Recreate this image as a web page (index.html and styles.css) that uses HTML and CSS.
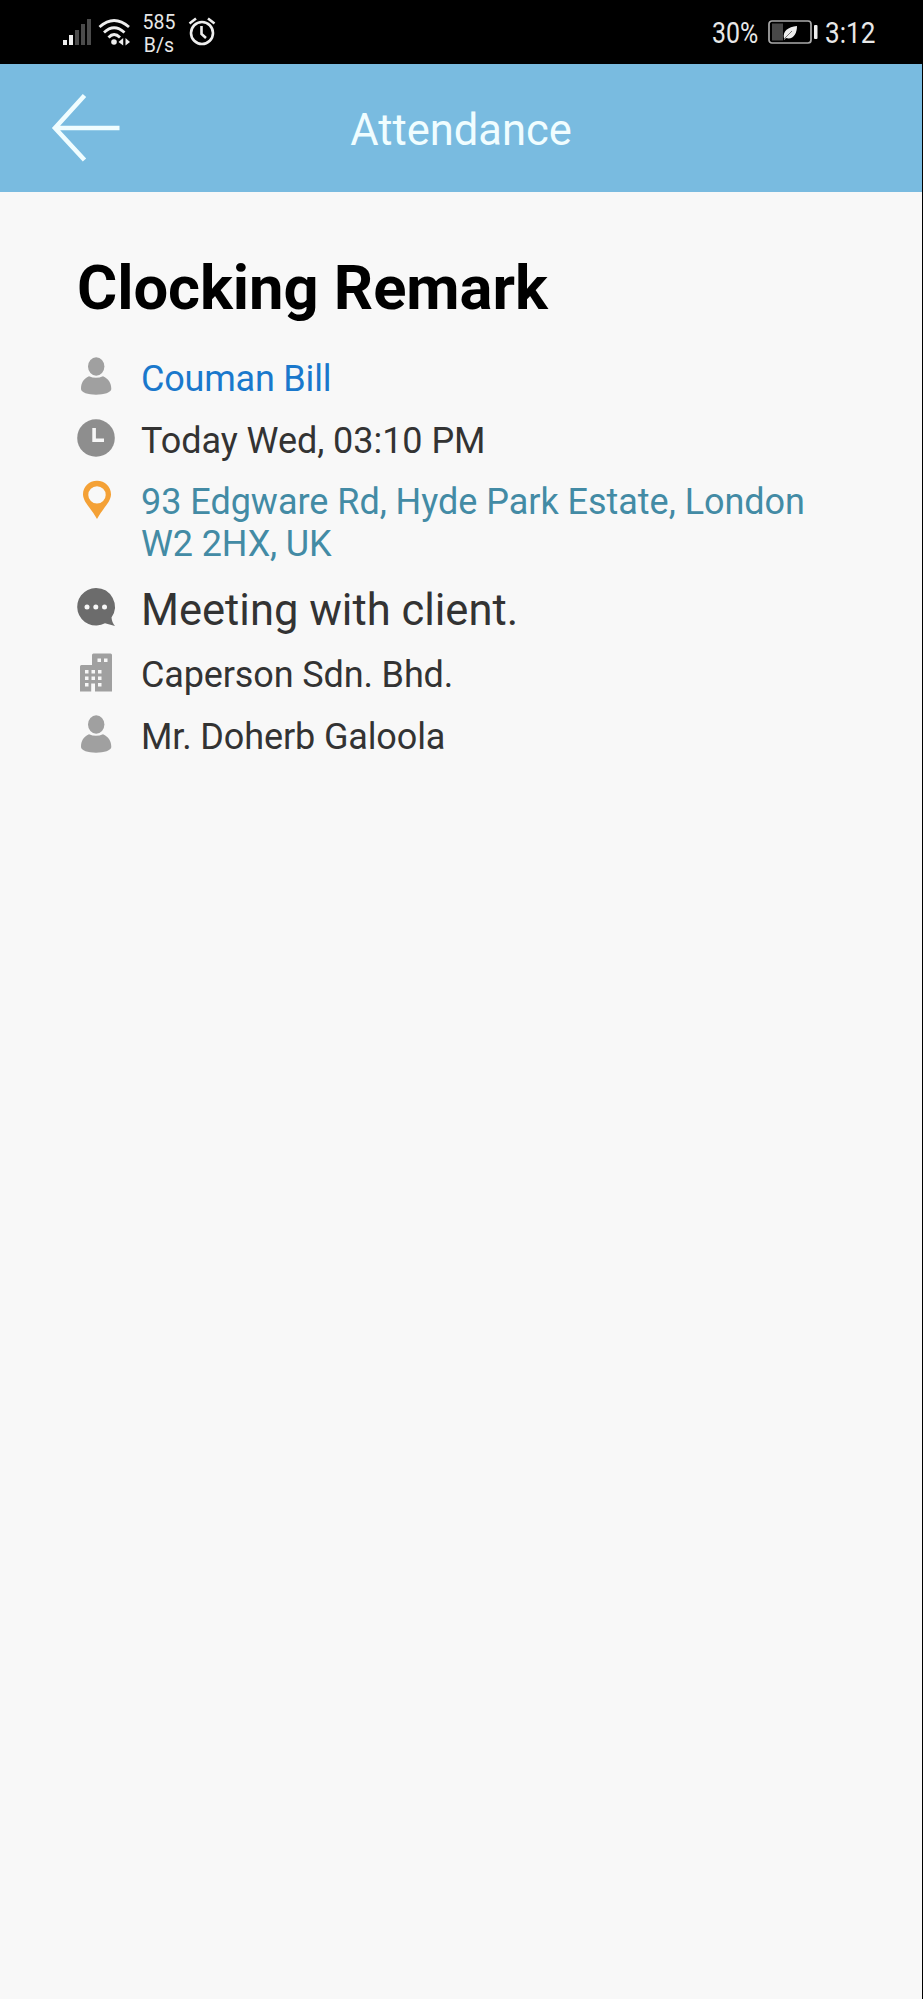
FILE: index.html
```
<!DOCTYPE html>
<html lang="en">
<head>
<meta charset="utf-8">
<title>Attendance</title>
<link rel="stylesheet" href="styles.css">
</head>
<body>
<div class="status">
  <svg class="signal" width="29" height="28" viewBox="0 0 29 28"><g fill="#eee"><rect x="0" y="22" width="4" height="5"/><rect x="6" y="17" width="4" height="10"/></g><g fill="#4b4b4b"><rect x="12" y="12" width="4" height="15"/><rect x="18" y="6" width="4" height="21"/><rect x="24" y="1" width="4" height="26"/></g></svg>
  <svg class="wifi" width="34" height="28" viewBox="0 0 34 28"><g fill="none" stroke="#eee" stroke-width="2.8"><path d="M1.500 9Q16 -4 31 9"/><path d="M6 14.500Q16 5 26.500 14.500"/><path d="M10.500 19.500Q16 13.500 22 19.500"/></g><circle cx="16" cy="24" r="2.800" fill="#eee"/><path fill="#eee" d="M20.500 24L25.200 20V27.500ZM27.500 20L32 24L27.500 27.500Z"/></svg>
  <div class="rate"><span>585</span><span>B/s</span></div>
  <svg class="alarm" width="28" height="30" viewBox="0 0 28 30"><g fill="none" stroke="#eee" stroke-width="2.600"><circle cx="14" cy="16" r="11"/><path d="M13.500 9V17L18 21"/><path d="M1.500 6.500L8 1.500M20 1.500L26.500 6.500"/></g></svg>
  <span class="percent">30%</span>
  <svg class="battery" width="50" height="24" viewBox="0 0 50 24"><rect x="1" y="1" width="42" height="22" rx="3" fill="none" stroke="#aaa" stroke-width="1.700"/><rect x="4" y="3.500" width="11" height="17" fill="#484848"/><path fill="#eee" d="M16 18.500C14.500 11 20 7 29 6C29 14 25 20 18 18L16 20Z"/><path d="M16 19L24 11" stroke="#555" stroke-width=".8"/><rect x="46" y="5" width="3.500" height="14" rx="1" fill="#eee"/></svg>
  <span class="time">3:12</span>
</div>
<header class="bar">
  <svg class="back" width="68" height="68" viewBox="0 0 68 68"><path d="M32.500 1.500L3 34L32.500 66M3 34H67.500" fill="none" stroke="#f0fdff" stroke-width="4.600"/></svg>
  <span class="bar-title">Attendance</span>
</header>
<main class="content">
  <h1>Clocking Remark</h1>
  <div class="row">
    <svg class="icon" viewBox="0 0 38 38"><g fill="#a0a0a0"><ellipse cx="19.200" cy="9.500" rx="8.200" ry="9.200"/><path d="M12 19.200Q19 22.200 26 19.200C31.500 21.500 34.300 26 34.300 32C34.300 35.500 27 37.700 19 37.700S4 35.500 4 32C4 26 6.500 21.500 12 19.200Z"/></g></svg>
    <span class="name">Couman Bill</span>
  </div>
  <div class="row">
    <svg class="icon" viewBox="0 0 38 38"><circle cx="19" cy="19" r="18.800" fill="#8e8e8e"/><path d="M17.100 9V21.300H27" fill="none" stroke="#f7f7f7" stroke-width="3.600"/></svg>
    <span class="when">Today Wed, 03:10 PM</span>
  </div>
  <div class="row">
    <svg class="icon" viewBox="0 0 38 38"><path fill="#f4a136" fill-rule="evenodd" d="M20 .8C12 .8 6 6.800 6 14.300C6 22 14 28 20 39C26 28 34 22 34 14.300C34 6.800 28 .8 20 .8ZM20 6.200A8.700 8.700 0 1 1 20 23.600A8.700 8.700 0 1 1 20 6.200Z"/></svg>
    <span class="address">93 Edgware Rd, Hyde Park Estate, London<br><span class="postcode">W2 2HX, UK</span></span>
  </div>
  <div class="row remark">
    <svg class="icon" viewBox="0 0 38 38"><path fill="#6c6c6c" d="M19 0A18.800 18.800 0 0 1 34.500 29.500Q35 35 38 38L28 35.300A18.800 18.800 0 1 1 19 0Z"/><g fill="#f7f7f7"><circle cx="10" cy="19" r="2.500"/><circle cx="18.800" cy="19" r="2.500"/><circle cx="27.500" cy="19" r="2.500"/></g></svg>
    <span class="note">Meeting with client.</span>
  </div>
  <div class="row">
    <svg class="icon" viewBox="0 0 38 38"><path fill="#a0a0a0" d="M3 38.500V13.500Q3 12 4.500 12H15V2Q15 .5 16.500 .5H33.500Q35 .5 35 2V38.500H18V30.500H14.200V38.500H3Z"/><g fill="#f7f7f7"><path d="M20.500 5.500h3.500v3.500h-3.500zM27 5.500h3.500v3.500H27zM8 17h3.500v3.500H8zM14.500 17H18v3.500h-3.500zM21 17h3.500v3.500H21zM8 23.500h3.500V27H8zM14.500 23.500H18V27h-3.500zM21 23.500h3.500V27H21zM8 30h3.500v3.500H8zM21 30h3.500v3.500H21z"/></g></svg>
    <span class="company">Caperson Sdn. Bhd.</span>
  </div>
  <div class="row">
    <svg class="icon" viewBox="0 0 38 38"><g fill="#a0a0a0"><ellipse cx="19.200" cy="9.500" rx="8.200" ry="9.200"/><path d="M12 19.200Q19 22.200 26 19.200C31.500 21.500 34.300 26 34.300 32C34.300 35.500 27 37.700 19 37.700S4 35.500 4 32C4 26 6.500 21.500 12 19.200Z"/></g></svg>
    <span class="contact">Mr. Doherb Galoola</span>
  </div>
</main>
</body>
</html>
```
FILE: styles.css
```
* { box-sizing: border-box; }
html { background: #000; }
body {
  margin: 0;
  width: 922px;
  min-height: 1999px;
  background: #f8f8f8;
  font-family: Roboto, sans-serif;
  color: #333;
}
svg { display: block; flex: none; overflow: visible; }
.status {
  display: flex;
  align-items: flex-start;
  width: 923px;
  height: 64px;
  background: #000;
  color: #e8e8e8;
  white-space: nowrap;
}
.signal { margin: 18px 0 0 63px; }
.wifi { margin: 18px 0 0 6px; }
.rate {
  display: flex;
  flex-direction: column;
  align-items: center;
  width: 34px;
  margin: 11px 0 0 10px;
  font-size: 19.500px;
  line-height: 23px;
}
.alarm { margin: 17px 0 0 12px; }
.percent {
  width: 47px;
  margin: 15px 0 0 496px;
  font-size: 30px;
  line-height: 36px;
  transform: scaleX(.83);
  transform-origin: left;
}
.battery { margin: 20px 0 0 9px; }
.time {
  margin: 15px 0 0 7px;
  font-size: 30px;
  line-height: 36px;
  transform: scaleX(.87);
  transform-origin: left;
}
.bar {
  display: grid;
  grid-template-columns: 120px 1fr 120px;
  height: 128px;
  background: #79bbe0;
  color: #f0fdff;
}
.back { margin: 30px 0 0 52px; }
.bar-title {
  margin-top: 42px;
  text-align: center;
  font-size: 43.500px;
  line-height: 50px;
}
.content {
  display: flex;
  flex-direction: column;
  gap: 19.600px;
  padding: 60px 0 0 77px;
}
h1 {
  margin: 0 0 13.400px;
  font-size: 61.500px;
  line-height: 72px;
  font-weight: 700;
  letter-spacing: -.05px;
  color: #000;
  white-space: nowrap;
}
.row {
  display: grid;
  grid-template-columns: 38px 1fr;
  column-gap: 26px;
  font-size: 36px;
  line-height: 42px;
  white-space: nowrap;
}
.row > span { justify-self: start; padding-top: 1px; margin-bottom: -1px; }
.icon { width: 38px; height: 38px; }
.remark { font-size: 43.500px; line-height: 50px; }
.remark .icon { margin-top: 4px; }
.row > .note { padding-top: 2px; margin-bottom: -2px; }
.name { color: #1a78cc; letter-spacing: -.2px; }
.when { letter-spacing: -.05px; }
.address { color: #438ba5; letter-spacing: -.03px; }
.postcode, .company, .contact { letter-spacing: -.13px; }
```
